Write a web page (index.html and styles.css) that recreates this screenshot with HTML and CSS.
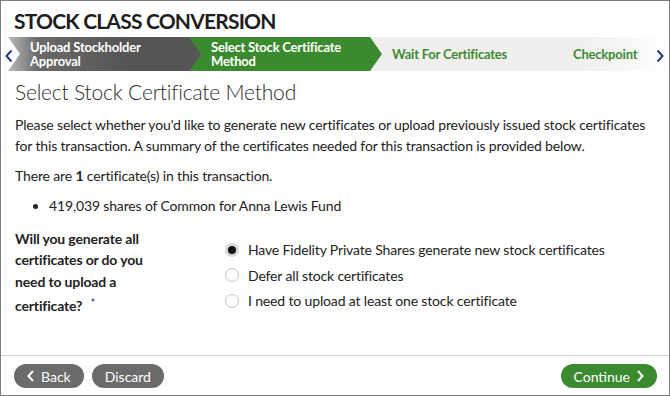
FILE: index.html
```html
<!DOCTYPE html>
<html lang="en">
<head>
    <meta charset="UTF-8">
    <meta name="viewport" content="width=device-width, initial-scale=1.0">
    <title>Stock Class Conversion</title>
    <link rel="stylesheet" href="styles.css">
</head>
<body>
    <div class="card">
        <header>
            <h1>STOCK CLASS CONVERSION</h1>
            <div class="steps">
                <span class="step-nav prev">
                    <svg width="8" height="14" viewBox="0 0 8 14"><path d="M6.5 1.5 L1.5 7 L6.5 12.5" fill="none" stroke="#22397a" stroke-width="2"/></svg>
                </span>
                <div class="step done">Upload Stockholder<br>Approval</div>
                <div class="step current">Select Stock Certificate<br>Method</div>
                <div class="step todo">Wait For Certificates</div>
                <div class="step todo last">Checkpoint</div>
                <span class="step-nav next">
                    <svg width="8" height="14" viewBox="0 0 8 14"><path d="M1.5 1.5 L6.5 7 L1.5 12.5" fill="none" stroke="#22397a" stroke-width="2"/></svg>
                </span>
            </div>
        </header>

        <main>
            <h2>Select Stock Certificate Method</h2>
            <p>Please select whether you'd like to generate new certificates or upload previously issued stock certificates for this transaction. A summary of the certificates needed for this transaction is provided below.</p>
            <p>There are <b>1</b> certificate(s) in this transaction.</p>
            <ul>
                <li>419,039 shares of Common for Anna Lewis Fund</li>
            </ul>

            <div class="question">
                <div class="question-label">Will you generate all certificates or do you need to upload a certificate? <span class="required">*</span></div>
                <div class="options">
                    <label class="option"><span class="radio checked"></span>Have Fidelity Private Shares generate new stock certificates</label>
                    <label class="option"><span class="radio"></span>Defer all stock certificates</label>
                    <label class="option"><span class="radio"></span>I need to upload at least one stock certificate</label>
                </div>
            </div>
        </main>

        <footer>
            <button class="btn btn-gray">
                <svg width="8" height="12" viewBox="0 0 8 12"><path d="M6 1 L1.5 6 L6 11" fill="none" stroke="white" stroke-width="2"/></svg>
                Back
            </button>
            <button class="btn btn-gray">Discard</button>
            <button class="btn btn-green">
                Continue
                <svg width="8" height="12" viewBox="0 0 8 12"><path d="M2 1 L6.5 6 L2 11" fill="none" stroke="white" stroke-width="2"/></svg>
            </button>
        </footer>
    </div>
</body>
</html>
```

FILE: styles.css
```css
body {
    margin: 0;
    font-family: Lato, "Open Sans", sans-serif;
    color: #222;
    background: #fff;
}
.card {
    width: 670px;
    height: 396px;
    box-sizing: border-box;
    border: 1px solid #7c7c7c;
    display: flex;
    flex-direction: column;
}
header {
    padding-top: 7px;
}
h1 {
    margin: 0 0 0 13px;
    font-size: 21px;
    font-weight: 700;
    line-height: 26px;
    letter-spacing: -0.8px;
    color: #1e1e1e;
}
.steps {
    position: relative;
    display: flex;
    margin-top: 3px;
    height: 34px;
    padding-left: 7px;
    overflow: hidden;
}
.step {
    flex-shrink: 0;
    width: 194px;
    height: 34px;
    box-sizing: border-box;
    padding: 1px 0 0 22px;
    display: flex;
    align-items: center;
    font-size: 13px;
    font-weight: 700;
    line-height: 13.5px;
    letter-spacing: -0.2px;
    margin-right: -13px;
    clip-path: polygon(0 0, calc(100% - 12px) 0, 100% 50%, calc(100% - 12px) 100%, 0 100%, 12px 50%);
}
.step.done {
    background: linear-gradient(to right, #b9b9b9 0, #6a6a6a 30px, #555 120px);
    color: #fff;
}
.step.current {
    background: #3b8a2f;
    color: #fff;
}
.step.todo {
    background: #f0efed;
    color: #3d8a35;
}
.step.last {
    width: 120px;
    background: linear-gradient(to right, #f0efed 30px, #f8f8f7 80px, #fff);
    clip-path: polygon(0 0, 100% 0, 100% 100%, 0 100%, 12px 50%);
}
.step-nav {
    position: absolute;
    top: 10px;
}
.step-nav.prev {
    left: 4px;
}
.step-nav.next {
    right: 5px;
}
main {
    flex: 1;
    padding: 0 14px;
    font-size: 14px;
    line-height: 21px;
    letter-spacing: -0.15px;
}
h2 {
    margin: 8px 0 9px;
    font-size: 21px;
    font-weight: 300;
    line-height: 26px;
    letter-spacing: -0.2px;
    color: #2b2b2b;
}
p {
    margin: 0 0 9px;
}
ul {
    margin: 0 0 12px;
    padding-left: 34px;
}
.question {
    display: flex;
}
.question-label {
    width: 150px;
    margin-right: 60px;
    font-weight: 700;
    line-height: 21.4px;
}
.required {
    color: #3f5fb5;
    font-size: 11px;
    vertical-align: 4px;
    margin-left: 5px;
}
.options {
    padding-top: 9px;
}
.option {
    display: flex;
    align-items: center;
    height: 25.5px;
}
.radio {
    width: 14px;
    height: 14px;
    box-sizing: border-box;
    border: 1px solid #c4c4c4;
    border-radius: 50%;
    margin-right: 9px;
    background: #fff;
}
.radio.checked {
    border: 3px solid #d8d8d8;
    background: #111;
}
footer {
    border-top: 1px solid #cfcfcf;
    padding: 8px 12px 7px 13px;
    display: flex;
    gap: 8px;
}
.btn {
    height: 24px;
    border: none;
    border-radius: 12px;
    padding: 0 13px;
    font-family: Lato, "Open Sans", sans-serif;
    font-size: 14px;
    color: #fff;
    display: flex;
    align-items: center;
    gap: 6px;
    cursor: pointer;
}
.btn-gray {
    background: #6b6b6b;
}
.btn-green {
    background: #3b8a2f;
    margin-left: auto;
}
```
